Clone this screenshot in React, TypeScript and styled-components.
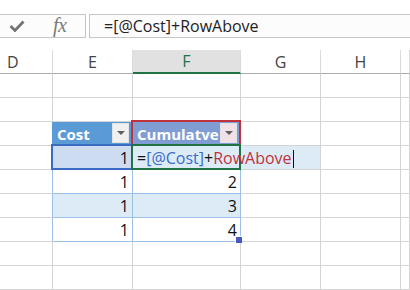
import React from 'react';
import styled, { createGlobalStyle, css } from 'styled-components';

const Global = createGlobalStyle`
  html, body { margin: 0; padding: 0; background: #ffffff; overflow: hidden; }
  body { font-family: "Open Sans", "Noto Sans", sans-serif; }
`;

const Page = styled.div`
  width: 410px;
  height: 290px;
  overflow: hidden;
  background: #ffffff;
  display: flex;
  flex-direction: column;
`;

const FormulaBar = styled.div`
  display: flex;
  gap: 3px;
  margin-top: 14px;
  height: 30px;
  margin-bottom: 12px;
`;

const CommandBox = styled.div`
  width: 86px;
  box-sizing: border-box;
  border: 1px solid #c6c6c6;
  border-left: none;
  background: #fcfcfc;
  display: flex;
  align-items: center;
  padding-left: 9px;
  gap: 28px;
`;

const FxLabel = styled.span`
  font-family: "Liberation Serif", "DejaVu Serif", serif;
  font-style: italic;
  font-size: 20px;
  line-height: 1;
  color: #7a7a7a;
  letter-spacing: -0.5px;
  margin-top: -2px;
`;

const FormulaInput = styled.div`
  flex: 1;
  box-sizing: border-box;
  border: 1px solid #c6c6c6;
  border-right: none;
  background: #fcfcfc;
  display: flex;
  align-items: center;
  padding-left: 14px;
  font-size: 16px;
  color: #222;
  white-space: nowrap;
`;

const Grid = styled.div`
  display: grid;
  grid-template-columns: 53px 80px 108px 80px 80px 9px;
  grid-auto-rows: 24px;
`;

const ColHeader = styled.div<{ $selected?: boolean; $first?: boolean }>`
  box-sizing: border-box;
  border-right: 1px solid #dadada;
  border-bottom: 1px solid #ababab;
  display: flex;
  align-items: center;
  justify-content: ${(p) => (p.$first ? 'flex-start' : 'center')};
  padding-left: ${(p) => (p.$first ? '7px' : '0')};
  font-size: 16px;
  color: #444;
  ${(p) =>
    p.$selected &&
    css`
      background: #e1e1e1;
      color: #217346;
      border-bottom: 2px solid #217346;
    `}
`;

type Hl = 'blue' | 'red' | 'green';
const hlColor: Record<Hl, string> = { blue: '#3b6cc4', red: '#c1323f', green: '#217346' };

const Cell = styled.div<{
  $bg?: string;
  $right?: string;
  $bottom?: string;
  $align?: 'left' | 'right';
  $head?: boolean;
  $hl?: Hl;
}>`
  position: relative;
  box-sizing: border-box;
  background: ${(p) => p.$bg || '#ffffff'};
  border-right: 1px solid ${(p) => p.$right || '#d4d4d4'};
  border-bottom: 1px solid ${(p) => p.$bottom || '#d4d4d4'};
  display: flex;
  align-items: center;
  justify-content: ${(p) => (p.$align === 'right' ? 'flex-end' : 'flex-start')};
  padding: ${(p) => (p.$align === 'right' ? '0 3px 0 0' : '0 0 0 4px')};
  font-size: ${(p) => (p.$head ? '15px' : '16px')};
  color: ${(p) => (p.$head ? '#ffffff' : '#111')};
  font-weight: ${(p) => (p.$head ? 700 : 400)};
  white-space: nowrap;
  ${(p) =>
    p.$hl &&
    css`
      z-index: ${p.$hl === 'green' ? 3 : 2};
      &::after {
        content: '';
        position: absolute;
        top: -2px;
        left: -2px;
        right: -1px;
        bottom: -1px;
        border: 2px solid ${hlColor[p.$hl]};
        pointer-events: none;
      }
    `}
`;

const DropButton = styled.span<{ $tint?: string }>`
  position: absolute;
  right: 3px;
  top: 1px;
  width: 17px;
  height: 20px;
  box-sizing: border-box;
  background: ${(p) => p.$tint || '#f0f0f0'};
  border: 1px solid #e2e2e2;
  display: flex;
  align-items: center;
  justify-content: center;
  &::before {
    content: '';
    border-left: 4px solid transparent;
    border-right: 4px solid transparent;
    border-top: 4px solid #606060;
  }
`;

const FillHandle = styled.span`
  position: absolute;
  right: -2px;
  bottom: -2px;
  width: 6px;
  height: 6px;
  background: #4a56c0;
  border-top: 1px solid #fff;
  border-left: 1px solid #fff;
  z-index: 4;
`;

const EditText = styled.span`
  position: relative;
  z-index: 4;
  color: #111;
`;

const RefBlue = styled.span`
  color: #3a6ccc;
`;
const RefRed = styled.span`
  color: #c1323f;
`;
const Caret = styled.span`
  display: inline-block;
  width: 1px;
  height: 18px;
  background: #111;
  margin-left: 1px;
  vertical-align: middle;
`;

const Check = () => (
  <svg width="16" height="12" viewBox="0 0 16 12">
    <polyline points="1.5,6 6,10.5 14.5,1.5" fill="none" stroke="#737373" strokeWidth="2.8" />
  </svg>
);

const BLUE_LINE = '#9bc2e6';
const BAND = '#ddebf7';

const EmptyRow = ({ n }: { n: number }) => (
  <>
    {Array.from({ length: 6 }).map((_, i) => (
      <Cell key={`${n}-${i}`} />
    ))}
  </>
);

const BodyRow = ({ cost, total, band, last }: { cost: string; total: string; band?: boolean; last?: boolean }) => (
  <>
    <Cell $right={BLUE_LINE} />
    <Cell $bg={band ? BAND : '#fff'} $right={BLUE_LINE} $bottom={BLUE_LINE} $align="right">
      {cost}
    </Cell>
    <Cell $bg={band ? BAND : '#fff'} $right={BLUE_LINE} $bottom={BLUE_LINE} $align="right">
      {total}
      {last && <FillHandle />}
    </Cell>
    <Cell />
    <Cell />
    <Cell />
  </>
);

export default function App() {
  return (
    <Page>
      <Global />
      <FormulaBar>
        <CommandBox>
          <Check />
          <FxLabel>fx</FxLabel>
        </CommandBox>
        <FormulaInput>=[@Cost]+RowAbove</FormulaInput>
      </FormulaBar>
      <Grid>
        <ColHeader $first>D</ColHeader>
        <ColHeader>E</ColHeader>
        <ColHeader $selected>F</ColHeader>
        <ColHeader>G</ColHeader>
        <ColHeader>H</ColHeader>
        <ColHeader />

        <EmptyRow n={1} />
        <EmptyRow n={2} />

        <Cell $right="#5b9bd5" />
        <Cell $bg="#5b9bd5" $right="#5b9bd5" $bottom="#5b9bd5" $head>
          Cost
          <DropButton />
        </Cell>
        <Cell $bg="#7f9dd3" $right="#7f9dd3" $bottom="#7f9dd3" $head $hl="red">
          Cumulatve
          <DropButton $tint="#efe1e7" />
        </Cell>
        <Cell />
        <Cell />
        <Cell />

        <Cell />
        <Cell $bg="#cddcf1" $right="#cddcf1" $bottom={BLUE_LINE} $align="right" $hl="blue">
          1
        </Cell>
        <Cell $bg={BAND} $right={BAND} $bottom={BLUE_LINE} $hl="green">
          <EditText>
            =<RefBlue>[@Cost]</RefBlue>+<RefRed>RowAbove</RefRed>
            <Caret />
          </EditText>
        </Cell>
        <Cell $bg={BAND} />
        <Cell />
        <Cell />

        <BodyRow cost="1" total="2" />
        <BodyRow cost="1" total="3" band />
        <BodyRow cost="1" total="4" last />

        <EmptyRow n={8} />
        <EmptyRow n={9} />
      </Grid>
    </Page>
  );
}
